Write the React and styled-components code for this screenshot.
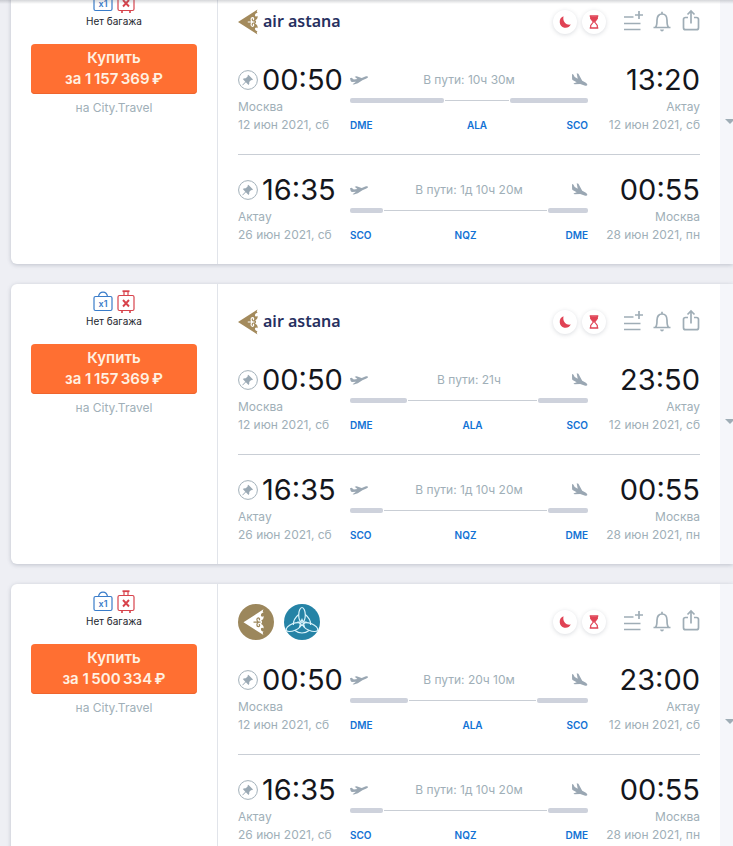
import React, { useState } from "react";
import styled, { createGlobalStyle } from "styled-components";

const tickets = [
  {
    id: "kc-1",
    carriers: ["astana"],
    price: "1\u2009157\u2009369\u2009₽",
    agency: "City.Travel",
    segments: [
      {
        depart: "00:50",
        from: "Москва",
        departDate: "12 июн 2021, сб",
        arrive: "13:20",
        to: "Актау",
        arriveDate: "12 июн 2021, сб",
        duration: "10ч 30м",
        codes: ["DME", "ALA", "SCO"],
        legs: [94, 66, 78],
      },
      {
        depart: "16:35",
        from: "Актау",
        departDate: "26 июн 2021, сб",
        arrive: "00:55",
        to: "Москва",
        arriveDate: "28 июн 2021, пн",
        duration: "1д 10ч 20м",
        codes: ["SCO", "NQZ", "DME"],
        legs: [33, 165, 40],
      },
    ],
  },
  {
    id: "kc-2",
    carriers: ["astana"],
    price: "1\u2009157\u2009369\u2009₽",
    agency: "City.Travel",
    segments: [
      {
        depart: "00:50",
        from: "Москва",
        departDate: "12 июн 2021, сб",
        arrive: "23:50",
        to: "Актау",
        arriveDate: "12 июн 2021, сб",
        duration: "21ч",
        codes: ["DME", "ALA", "SCO"],
        legs: [57, 131, 50],
      },
      {
        depart: "16:35",
        from: "Актау",
        departDate: "26 июн 2021, сб",
        arrive: "00:55",
        to: "Москва",
        arriveDate: "28 июн 2021, пн",
        duration: "1д 10ч 20м",
        codes: ["SCO", "NQZ", "DME"],
        legs: [33, 165, 40],
      },
    ],
  },
  {
    id: "kc-3",
    carriers: ["astana", "scat"],
    price: "1\u2009500\u2009334\u2009₽",
    agency: "City.Travel",
    segments: [
      {
        depart: "00:50",
        from: "Москва",
        departDate: "12 июн 2021, сб",
        arrive: "23:00",
        to: "Актау",
        arriveDate: "12 июн 2021, сб",
        duration: "20ч 10м",
        codes: ["DME", "ALA", "SCO"],
        legs: [58, 129, 51],
      },
      {
        depart: "16:35",
        from: "Актау",
        departDate: "26 июн 2021, сб",
        arrive: "00:55",
        to: "Москва",
        arriveDate: "28 июн 2021, пн",
        duration: "1д 10ч 20м",
        codes: ["SCO", "NQZ", "DME"],
        legs: [33, 165, 40],
      },
    ],
  },
];

const HandBagIcon = () => (
  <svg width="20" height="24" viewBox="0 0 20 24" fill="none" stroke="#3a7cc9" strokeWidth="1.2">
    <rect x="1" y="6.5" width="18" height="14" rx="1.5" />
    <path d="M5.5 6.5C6 3.5 8 2.2 10 2.2s4 1.3 4.5 4.3" />
    <text
      x="10"
      y="17"
      textAnchor="middle"
      fontFamily="Inter, sans-serif"
      fontSize="9"
      fontWeight="600"
      fill="#3a7cc9"
      stroke="none"
    >
      x1
    </text>
  </svg>
);

const NoLuggageIcon = () => (
  <svg width="18" height="24" viewBox="0 0 18 24" fill="none" stroke="#d8434c" strokeWidth="1.2">
    <path d="M5.5 1.2h7" strokeWidth="1.8" />
    <path d="M7 1.5V5.5M11 1.5V5.5" />
    <rect x="1" y="5.5" width="16" height="15" rx="1.5" />
    <path d="M5 20.5V23M13 20.5V23" strokeWidth="1.6" />
    <path d="M6 10l6 6.5M12 10l-6 6.5" strokeWidth="1.9" />
  </svg>
);

// arrow head with the carved right edge, shared by both logo variants
const AstanaShape = ({ color, cut }) => (
  <>
    <path
      d="M5.5 18.2L25.5 5.3c-1.2 2.2-.8 3.2.3 3.3-1.8.2-3.3 1.6-2.8 3.2.5 1.3 2 1 2.3 0 .9 2-.2 3.8-2.3 4.7 0 0 1.2.5 1 1.7-.1 1.2-1 1.7-1 1.7 2.1.9 3.2 2.7 2.3 4.7-.3-1-1.8-1.3-2.3 0-.5 1.6 1 3 2.8 3.2-1.1.1-1.5 1.1-.3 3.3Z"
      fill={color}
    />
    <path
      d="M15.5 18.2h7M20.5 18c-2-.6-2.2-4-.2-4.2 1.5 0 1.7 2 .5 2.2M20.5 18.4c-2 .6-2.2 4-.2 4.2 1.5 0 1.7-2 .5-2.2"
      fill="none"
      stroke={cut}
      strokeWidth="1.2"
    />
  </>
);

const AstanaMark = () => (
  <svg width="20" height="26" viewBox="5.5 5.2 20.5 26">
    <AstanaShape color="#a38a5c" cut="#fff" />
  </svg>
);

const AstanaRound = () => (
  <svg width="36" height="36" viewBox="0 0 36 36" role="img" aria-label="Air Astana">
    <circle cx="18" cy="18" r="18" fill="#9c875c" />
    <AstanaShape color="#fff" cut="#9c875c" />
  </svg>
);

const ScatRound = () => (
  <svg width="36" height="36" viewBox="0 0 36 36" role="img" aria-label="SCAT">
    <circle cx="18" cy="18" r="18" fill="#2583a6" />
    <g fill="none" stroke="#d9f3fb" strokeWidth="1.2">
      <ellipse cx="18" cy="11" rx="3.3" ry="7.5" />
      <ellipse cx="18" cy="10.5" rx="3.5" ry="8" transform="rotate(113 18 19.5)" />
      <ellipse cx="18" cy="10.5" rx="3.5" ry="8" transform="rotate(-113 18 19.5)" />
      <path d="M14.7 10.5C11 13.5 9.2 17.5 9.3 21M21.3 10.5c3.7 3 5.5 7 5.4 10.5M11 26.5c4 3.3 10 3.3 14 0" />
      <path d="M18 15.5l1 2.3 2.5.2-1.9 1.7.6 2.5-2.2-1.3-2.2 1.3.6-2.5-1.9-1.7 2.5-.2z" />
    </g>
  </svg>
);

const MoonIcon = () => (
  <svg width="12" height="12" viewBox="0 0 12 12" fill="#e04355">
    <path d="M4.5.3A6 6 0 0 0 5.3 11.7 6 6 0 0 0 11.7 8.6C8 9.5 3.3 6.5 4.5.3Z" />
  </svg>
);

const HourglassIcon = () => (
  <svg width="10" height="14" viewBox="0 0 10 14" fill="none" stroke="#e04355">
    <path d="M.7 1h8.6M.7 13h8.6" strokeWidth="1.4" />
    <path d="M1.7 1v2.5L4.3 7 1.7 10.5V13M8.3 1v2.5L5.7 7l2.6 3.5V13" strokeWidth="1.2" />
    <path d="M1.7 1.5h6.6v2L5 7.5 1.7 3.5z" fill="#e04355" stroke="none" />
  </svg>
);

const ListPlusIcon = () => (
  <svg width="20" height="24" viewBox="0 0 20 24" fill="none" stroke="#9fadb6" strokeWidth="1.7">
    <path d="M0 7h9.5M0 13.5h16.5M0 19.5h16.5M15 1v8M11 5h8" />
  </svg>
);

const BellIcon = () => (
  <svg width="20" height="24" viewBox="0 0 20 24" fill="none" stroke="#9fadb6" strokeWidth="1.7">
    <path d="M1.5 17.5h17M3.5 17.3c1.3-1.3 1.5-2.8 1.5-7C5 6.5 7 4 10 4s5 2.5 5 6.3c0 4.2.2 5.7 1.5 7M10 4V1.8" />
    <path d="M8 19.5h4c-.3 1.3-1 2-2 2s-1.7-.7-2-2z" fill="#9fadb6" stroke="none" />
  </svg>
);

const ShareIcon = () => (
  <svg width="20" height="24" viewBox="0 0 20 24" fill="none" stroke="#9fadb6" strokeWidth="1.7">
    <path d="M8 7.5H5.5a2 2 0 0 0-2 2v8.2a2 2 0 0 0 2 2h11a2 2 0 0 0 2-2V9.5a2 2 0 0 0-2-2H14M11 13.5V1M7.5 4.5L11 1l3.5 3.5" />
  </svg>
);

const PinIcon = () => (
  <svg width="20" height="20" viewBox="0 0 20 20">
    <circle cx="10" cy="10" r="9.4" fill="none" stroke="#a3b1ba" />
    <path
      d="M10.3 4.8l4.7 4.7-1 .7-.8-.2-2 2c.3 1.3 0 2.2-.7 3l-2.6-2.7-3 2.9-.6.1.1-.6 2.9-3L4.8 9c.8-.7 1.8-1 3-.7l2-2-.2-.8z"
      fill="#9aa9b4"
    />
  </svg>
);

const TakeoffIcon = () => (
  <svg width="18" height="18" viewBox="0 0 18 18" fill="#9aa7b3">
    <path d="M0 7.3l1.6-.5 2.2 1.7 3.6-.4-2.7-2.4 1.9-.5 5.1 1.9 3.6-1.5c1.3-.5 2.5-.3 2.7.2.2.6-.6 1.3-1.6 1.7l-4 1.7-4.6 3.1-3.9 1.1-1.3-.2 3.4-2.4-3.8.2c-.7 0-1.2-.3-1.5-.9z" />
  </svg>
);

const LandingIcon = () => (
  <svg width="18" height="18" viewBox="0 0 18 18" fill="#9aa7b3">
    <path d="M2 3l1.3.4 1.4 2.5 3 1.8L6.7 2.2l1.7.6 3.8 7 3.3 1.8c1.3.8 2 1.8 1.8 2.5-.3.8-1.4.9-2.8.3L10.200 12.900 4.600 13.200l-1.200-.8 3.300-1.200L3 9.300c-.6-.4-.9-.9-.9-1.600z" />
  </svg>
);

const carrierLogos = { astana: AstanaRound, scat: ScatRound };

const Carriers = ({ list }) => {
  if (list.length === 1) {
    return (
      <Brand>
        <AstanaMark />
        <BrandName>air astana</BrandName>
      </Brand>
    );
  }
  return (
    <LogoRow>
      {list.map((name) => {
        const Logo = carrierLogos[name];
        return <Logo key={name} />;
      })}
    </LogoRow>
  );
};

const Segment = ({ data }) => {
  const [pinned, setPinned] = useState(false);
  return (
    <SegmentRow>
      <Endpoint>
        <TimeRow>
          <IconButton
            type="button"
            aria-label="Закрепить рейс"
            aria-pressed={pinned}
            onClick={() => setPinned(!pinned)}
          >
            <PinIcon />
          </IconButton>
          <Time>{data.depart}</Time>
        </TimeRow>
        <Place>{data.from}</Place>
        <Place>{data.departDate}</Place>
      </Endpoint>
      <Route>
        <RouteTop>
          <TakeoffIcon />
          <Duration>В пути: {data.duration}</Duration>
          <LandingIcon />
        </RouteTop>
        <Track $legs={data.legs}>
          <Leg />
          <Layover />
          <Leg />
        </Track>
        <Codes $legs={data.legs}>
          {data.codes.map((code) => (
            <Code key={code}>{code}</Code>
          ))}
        </Codes>
      </Route>
      <Endpoint $end>
        <TimeRow $end>
          <Time>{data.arrive}</Time>
        </TimeRow>
        <Place>{data.to}</Place>
        <Place>{data.arriveDate}</Place>
      </Endpoint>
    </SegmentRow>
  );
};

const Ticket = ({ ticket }) => (
  <Card>
    <Offer>
      <Baggage>
        <HandBagIcon />
        <NoLuggageIcon />
      </Baggage>
      <BaggageLabel>Нет багажа</BaggageLabel>
      <BuyButton type="button">
        <span>Купить</span>
        <span>за {ticket.price}</span>
      </BuyButton>
      <Agency>на {ticket.agency}</Agency>
    </Offer>
    <Details>
      <Header>
        <Carriers list={ticket.carriers} />
        <Tools>
          <Badge title="Ночная пересадка">
            <MoonIcon />
          </Badge>
          <Badge title="Долгая пересадка">
            <HourglassIcon />
          </Badge>
          <Actions>
            <IconButton type="button" aria-label="Добавить к сравнению">
              <ListPlusIcon />
            </IconButton>
            <IconButton type="button" aria-label="Следить за ценой">
              <BellIcon />
            </IconButton>
            <IconButton type="button" aria-label="Поделиться">
              <ShareIcon />
            </IconButton>
          </Actions>
        </Tools>
      </Header>
      {ticket.segments.map((segment, i) => (
        <Segment key={i} data={segment} />
      ))}
    </Details>
    <Expand type="button" aria-label="Подробнее">
      <Caret />
    </Expand>
  </Card>
);

const App = () => {
  return (
    <Page>
      <GlobalStyle />
      <Feed>
        {tickets.map((ticket) => (
          <Ticket key={ticket.id} ticket={ticket} />
        ))}
      </Feed>
    </Page>
  );
};

export default App;

// Styles
const GlobalStyle = createGlobalStyle`
  * {
    box-sizing: border-box;
  }

  body {
    margin: 0;
    background: #eeeff4;
    font-family: Inter, "Liberation Sans", sans-serif;
  }

  svg {
    display: block;
    flex-shrink: 0;
    overflow: visible;
  }

  button {
    font-family: inherit;
    cursor: pointer;
  }
`;

const Page = styled.main`
  position: relative;
  height: 100vh;
  overflow: hidden;

  &::before {
    content: "";
    position: absolute;
    z-index: 1;
    top: 0;
    left: 0;
    right: 0;
    height: 4px;
    background: linear-gradient(rgba(90, 95, 105, 0.25), rgba(90, 95, 105, 0));
  }
`;

const Feed = styled.div`
  display: flex;
  flex-direction: column;
  gap: 20px;
  margin-top: -16px;
  padding-left: 11px;
`;

const Card = styled.article`
  display: grid;
  grid-template-columns: 207px 1fr 13px;
  background: #fff;
  border-radius: 6px 0 0 6px;
  box-shadow: 0 1px 4px rgba(70, 80, 100, 0.28);
`;

const Offer = styled.div`
  display: flex;
  flex-direction: column;
  align-items: center;
  padding: 6px 20px;
  border-right: 1px solid #e1e4ea;
`;

const Baggage = styled.div`
  display: flex;
  gap: 4px;
`;

const BaggageLabel = styled.div`
  font-size: 10px;
  line-height: 14px;
  color: #23262e;
`;

const BuyButton = styled.button`
  display: flex;
  flex-direction: column;
  align-items: center;
  justify-content: center;
  width: 100%;
  height: 50px;
  margin-top: 16px;
  padding: 0 0 2px;
  border: none;
  border-radius: 4px;
  box-shadow: inset 0 -1px 0 #ee652e;
  background: #ff6f32;
  color: #fff1e2;
  font-size: 15px;
  font-weight: 600;
  line-height: 21px;
`;

const Agency = styled.div`
  margin-top: 5px;
  font-size: 12px;
  line-height: 18px;
  color: #a0afb8;
`;

const Details = styled.div`
  min-width: 0;
  padding: 20px;
`;

const Header = styled.header`
  display: flex;
  align-items: center;
  justify-content: space-between;
  height: 36px;
  margin-bottom: 24px;
`;

const Brand = styled.div`
  display: flex;
  align-items: center;
  gap: 5px;
`;

const BrandName = styled.span`
  padding-bottom: 2px;
  font-family: "Noto Sans", sans-serif;
  font-size: 16px;
  font-weight: 600;
  line-height: 20px;
  color: #27305f;
`;

const LogoRow = styled.div`
  display: flex;
  gap: 10px;
`;

const Tools = styled.div`
  display: flex;
  align-items: center;
  gap: 5px;
`;

const Badge = styled.span`
  display: flex;
  align-items: center;
  justify-content: center;
  width: 24px;
  height: 24px;
  border-radius: 50%;
  background: #fff;
  box-shadow: 0 1px 4px rgba(70, 80, 100, 0.2);
`;

const Actions = styled.div`
  display: flex;
  gap: 8px;
  margin-left: 13px;
`;

const IconButton = styled.button`
  padding: 0;
  border: none;
  background: none;
`;

const SegmentRow = styled.section`
  display: grid;
  grid-template-columns: 112px 1fr 112px;

  & + & {
    margin-top: 20px;
    padding-top: 19px;
    border-top: 1px solid #c9ced5;
  }
`;

const Endpoint = styled.div`
  text-align: ${(props) => (props.$end ? "right" : "left")};
`;

const TimeRow = styled.div`
  display: flex;
  align-items: center;
  justify-content: ${(props) => (props.$end ? "flex-end" : "flex-start")};
  gap: 4px;
  height: 32px;
  margin-bottom: 2px;
`;

const Time = styled.span`
  font-size: 29px;
  line-height: 32px;
  color: #14161c;
`;

const Place = styled.div`
  font-size: 12px;
  line-height: 18px;
  color: #a0afb8;
  white-space: nowrap;
`;

const Route = styled.div`
  min-width: 0;
`;

const RouteTop = styled.div`
  display: flex;
  align-items: center;
  justify-content: space-between;
  height: 32px;
  margin-bottom: 2px;
`;

const Duration = styled.span`
  font-size: 12px;
  line-height: 18px;
  color: #a0afb8;
`;

const Track = styled.div`
  display: grid;
  grid-template-columns: ${(props) => props.$legs.map((n) => `${n}fr`).join(" ")};
  align-items: center;
  height: 5px;
`;

const Leg = styled.span`
  height: 5px;
  border-radius: 2px;
  background: #ced2dc;
`;

const Layover = styled.span`
  height: 1px;
  margin: 0 1px;
  background: #c9ced5;
`;

const Codes = styled.div`
  display: grid;
  grid-template-columns: ${(props) => props.$legs.map((n) => `${n}fr`).join(" ")};
  margin-top: 13px;
`;

const Code = styled.span`
  font-size: 10px;
  font-weight: 600;
  line-height: 18px;
  color: #1272d4;
  text-align: center;

  &:first-child {
    text-align: left;
  }

  &:last-child {
    text-align: right;
  }
`;

const Expand = styled.button`
  display: flex;
  align-items: center;
  padding: 0 0 6px 5px;
  border: none;
  background: #f5f6fa;
  overflow: hidden;
`;

const Caret = styled.span`
  flex-shrink: 0;
  border: 5px solid transparent;
  border-top-color: #9fadb6;
  border-bottom: none;
`;
